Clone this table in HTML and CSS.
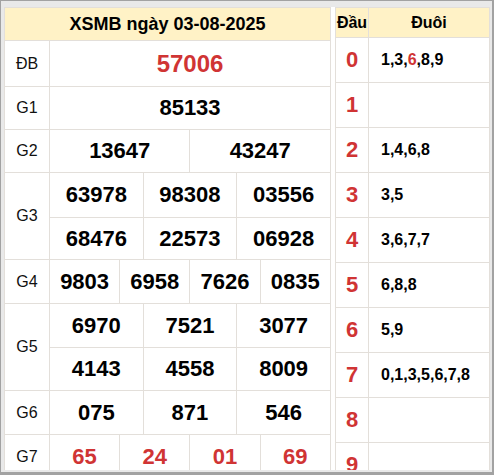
FILE: index.html
```html
<!DOCTYPE html>
<html lang="vi">
<head>
<meta charset="utf-8">
<title>XSMB ngày 03-08-2025</title>
<link rel="stylesheet" href="styles.css">
</head>
<body>
<div class="frame">
  <div class="content">
    <table class="kq">
      <colgroup>
        <col class="c-label">
        <col><col><col><col><col><col><col><col><col><col><col><col>
      </colgroup>
      <thead>
        <tr class="r-head"><th colspan="13">XSMB ngày 03-08-2025</th></tr>
      </thead>
      <tbody>
        <tr class="r-db"><td class="lbl">ĐB</td><td colspan="12" class="num db red">57006</td></tr>
        <tr class="r-43"><td class="lbl">G1</td><td colspan="12" class="num">85133</td></tr>
        <tr class="r-43"><td class="lbl">G2</td><td colspan="6" class="num">13647</td><td colspan="6" class="num">43247</td></tr>
        <tr class="r-45"><td class="lbl" rowspan="2">G3</td><td colspan="4" class="num">63978</td><td colspan="4" class="num">98308</td><td colspan="4" class="num">03556</td></tr>
        <tr class="r-42"><td colspan="4" class="num">68476</td><td colspan="4" class="num">22573</td><td colspan="4" class="num">06928</td></tr>
        <tr class="r-44"><td class="lbl">G4</td><td colspan="3" class="num">9803</td><td colspan="3" class="num">6958</td><td colspan="3" class="num">7626</td><td colspan="3" class="num">0835</td></tr>
        <tr class="r-44"><td class="lbl" rowspan="2">G5</td><td colspan="4" class="num">6970</td><td colspan="4" class="num">7521</td><td colspan="4" class="num">3077</td></tr>
        <tr class="r-43"><td colspan="4" class="num">4143</td><td colspan="4" class="num">4558</td><td colspan="4" class="num">8009</td></tr>
        <tr class="r-44"><td class="lbl">G6</td><td colspan="4" class="num">075</td><td colspan="4" class="num">871</td><td colspan="4" class="num">546</td></tr>
        <tr class="r-44"><td class="lbl">G7</td><td colspan="3" class="num red">65</td><td colspan="3" class="num red">24</td><td colspan="3" class="num red">01</td><td colspan="3" class="num red">69</td></tr>
      </tbody>
    </table>
    <table class="loto">
      <colgroup><col class="c-dau"><col></colgroup>
      <thead>
        <tr class="r-lhead"><th>Đầu</th><th>Đuôi</th></tr>
      </thead>
      <tbody>
        <tr><td class="dau">0</td><td class="duoi">1,3,<span class="red">6</span>,8,9</td></tr>
        <tr><td class="dau">1</td><td class="duoi"></td></tr>
        <tr><td class="dau">2</td><td class="duoi">1,4,6,8</td></tr>
        <tr><td class="dau">3</td><td class="duoi">3,5</td></tr>
        <tr><td class="dau">4</td><td class="duoi">3,6,7,7</td></tr>
        <tr><td class="dau">5</td><td class="duoi">6,8,8</td></tr>
        <tr><td class="dau">6</td><td class="duoi">5,9</td></tr>
        <tr><td class="dau">7</td><td class="duoi">0,1,3,5,6,7,8</td></tr>
        <tr><td class="dau">8</td><td class="duoi"></td></tr>
        <tr><td class="dau">9</td><td class="duoi"></td></tr>
      </tbody>
    </table>
  </div>
</div>
</body>
</html>
```

FILE: styles.css
```css
html, body {
  margin: 0;
  padding: 0;
}
body {
  font-family: "Liberation Sans", Arial, sans-serif;
  color: #000;
}
.frame {
  box-sizing: border-box;
  width: 494px;
  height: 475px;
  border: 1px solid #a2a2a2;
  border-right-width: 2px;
  border-bottom-width: 3px;
  background: #e9e9e9;
  padding: 6px 2px 2px 3px;
  overflow: hidden;
}
.content {
  background: #fff;
  height: 100%;
  display: flex;
  align-items: flex-start;
  gap: 4px;
  overflow: hidden;
}
table {
  border-collapse: collapse;
  table-layout: fixed;
  flex: none;
}
th, td {
  border: 1px solid #e3dfda;
  padding: 0;
  text-align: center;
  vertical-align: middle;
}
.kq {
  width: 327px;
}
.c-label {
  width: 45px;
}
thead th {
  background: #fff2c6;
  font-weight: bold;
}
.r-head th {
  height: 32px;
  font-size: 18px;
}
.r-db td { height: 45px; }
.r-42 td { height: 41px; }
.r-43 td { height: 42px; }
.r-44 td { height: 43px; }
.r-45 td { height: 44px; }
.lbl {
  font-size: 16px;
  color: #111;
}
.num {
  font-size: 22px;
  font-weight: bold;
}
.num.db {
  font-size: 24px;
}
.red {
  color: #d03434;
}
.loto {
  width: 155px;
}
.c-dau {
  width: 33px;
}
.r-lhead th {
  height: 29px;
  font-size: 16px;
}
.loto tbody td {
  height: 44px;
}
.dau {
  font-size: 22px;
  font-weight: bold;
  color: #d03434;
}
.duoi {
  text-align: left;
  padding-left: 12px;
  font-size: 16px;
  font-weight: bold;
}
```
